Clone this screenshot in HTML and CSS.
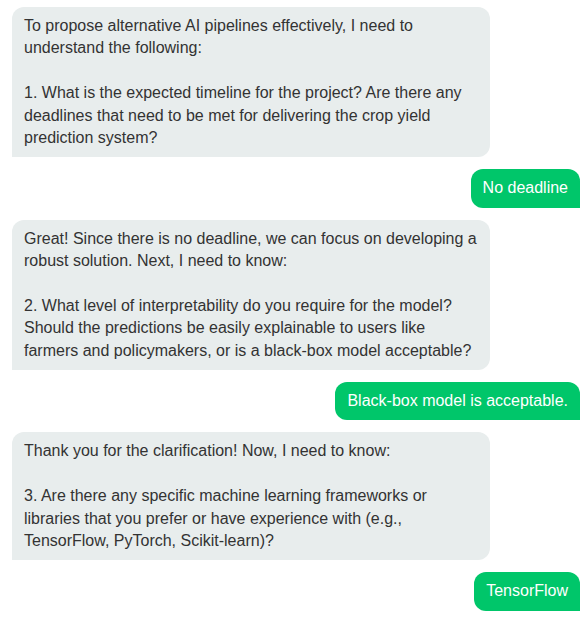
FILE: index.html
```html
<!DOCTYPE html>
<html>
<head>
<meta charset="utf-8">
<link rel="stylesheet" href="styles.css">
</head>
<body>
<div class="chat">
  <div class="msg bot">To propose alternative AI pipelines effectively, I need to understand the following:

1. What is the expected timeline for the project? Are there any deadlines that need to be met for delivering the crop yield prediction system?</div>
  <div class="msg user">No deadline</div>
  <div class="msg bot">Great! Since there is no deadline, we can focus on developing a robust solution. Next, I need to know:

2. What level of interpretability do you require for the model? Should the predictions be easily explainable to users like farmers and policymakers, or is a black-box model acceptable?</div>
  <div class="msg user">Black-box model is acceptable.</div>
  <div class="msg bot">Thank you for the clarification! Now, I need to know:

3. Are there any specific machine learning frameworks or libraries that you prefer or have experience with (e.g., TensorFlow, PyTorch, Scikit-learn)?</div>
  <div class="msg user">TensorFlow</div>
</div>
</body>
</html>
```
FILE: styles.css
```css
html, body {
  margin: 0;
  padding: 0;
  background: #ffffff;
}
body {
  font-family: "Liberation Sans", Arial, sans-serif;
  font-size: 16px;
  line-height: 1.4;
}
.chat {
  display: flex;
  flex-direction: column;
  gap: 12px;
  padding: 7px 8px 0 12px;
}
.msg {
  padding: 8px 12px;
  border-radius: 12px;
  white-space: pre-line;
}
.bot {
  align-self: flex-start;
  max-width: 454px;
  background: #e8eded;
  color: #333333;
  border-bottom-left-radius: 0;
}
.user {
  align-self: flex-end;
  background: #00c66a;
  color: #ffffff;
  border-bottom-right-radius: 0;
}
```
